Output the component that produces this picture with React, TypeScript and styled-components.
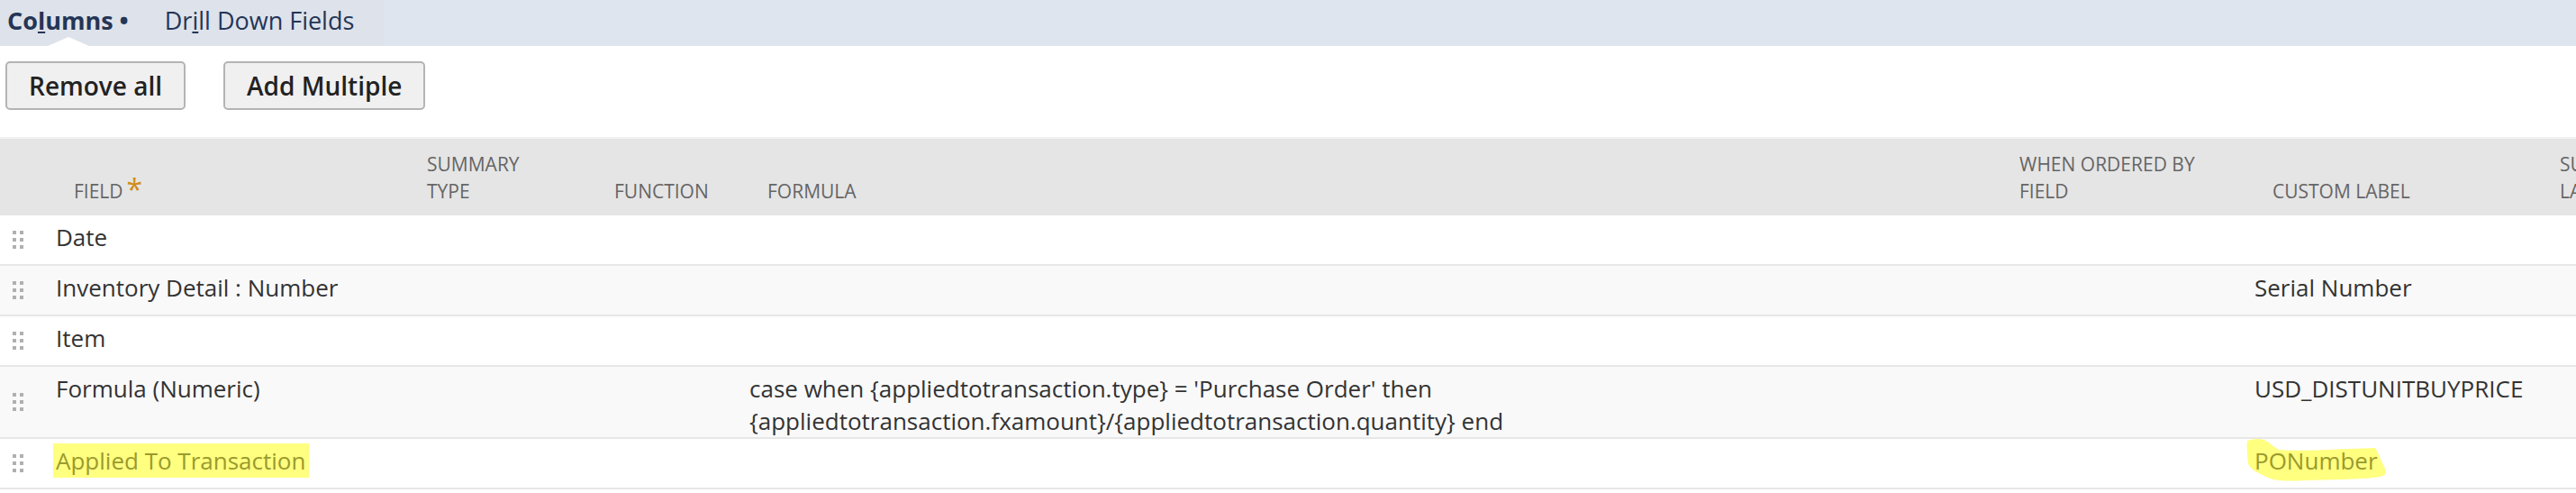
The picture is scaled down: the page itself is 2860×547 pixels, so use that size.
import React from 'react';
import styled, { createGlobalStyle } from 'styled-components';

const GlobalStyle = createGlobalStyle`
  html, body { margin: 0; padding: 0; background: #ffffff; overflow: hidden; }
  body { font-family: "Open Sans", "Noto Sans", sans-serif; }
  * { box-sizing: border-box; }
`;

const Page = styled.div`
  width: 2860px;
  height: 547px;
  overflow: hidden;
  background: #ffffff;
`;

const TabBar = styled.div`
  display: flex;
  height: 51px;
  background: #dfe5ef;
`;

const TabStrip = styled.div`
  display: flex;
  width: 426px;
  height: 51px;
  padding-left: 8px;
  background: #dee2ea;
`;

const Tab = styled.div<{ $active?: boolean }>`
  position: relative;
  height: 51px;
  font-size: 27px;
  line-height: 46px;
  color: #243556;
  font-weight: ${(p) => (p.$active ? 700 : 400)};
  margin-right: ${(p) => (p.$active ? '40px' : '0')};
  white-space: nowrap;
`;

const AccessKey = styled.span`
  text-decoration: underline;
  text-decoration-thickness: 2px;
  text-underline-offset: 2px;
`;

const Pointer = styled.span`
  position: absolute;
  left: 45px;
  bottom: 0;
  width: 0;
  height: 0;
  border-left: 23px solid transparent;
  border-right: 23px solid transparent;
  border-bottom: 10px solid #ffffff;
`;

const Toolbar = styled.div`
  display: flex;
  gap: 42px;
  padding: 17px 0 30px 6px;
`;

const Button = styled.button`
  height: 54px;
  padding: 0 24px;
  border: 2px solid #b4b4b4;
  border-radius: 5px;
  background: #f0f0f0;
  color: #222222;
  font-family: "Open Sans", "Noto Sans", sans-serif;
  font-size: 28px;
  font-weight: 600;
  line-height: 50px;
  cursor: pointer;
`;

const columns = '42px 392px 208px 170px 1390px 281px 319px 200px';

const HeaderRow = styled.div`
  display: grid;
  grid-template-columns: ${columns};
  height: 87px;
  border-top: 2px solid #f2f2f2;
  background: #e5e5e5;
`;

const HeaderCell = styled.div`
  align-self: end;
  padding: 0 8px 12px 40px;
  font-size: 21px;
  line-height: 30px;
  color: #666666;
  text-transform: uppercase;
  white-space: nowrap;
`;

const Required = styled.span`
  color: #d08c18;
  font-size: 32px;
  line-height: 0;
  margin-left: 4px;
  position: relative;
  top: 2px;
`;

const DataRow = styled.div<{ $alt?: boolean }>`
  display: grid;
  grid-template-columns: ${columns};
  min-height: 56px;
  border-bottom: 2px solid #e7e7e7;
  background: ${(p) => (p.$alt ? '#f9f9f9' : '#ffffff')};
`;

const Cell = styled.div`
  padding: 6px 20px 0;
  font-size: 26px;
  line-height: 36px;
  color: #333333;
  white-space: nowrap;
`;

const HandleCell = styled.div`
  align-self: center;
  justify-self: center;
  display: grid;
  grid-template-columns: 4px 4px;
  grid-auto-rows: 4px;
  gap: 4px;
  margin-left: -2px;
`;

const Dot = styled.span`
  width: 4px;
  height: 4px;
  background: #b0b0b0;
`;

const Marker = styled.span`
  background: #ffff80;
  color: #9a9a2e;
  padding: 1px 4px 1px 3px;
  margin-left: -3px;
`;

const ScribbleWrap = styled.span`
  position: relative;
  display: inline-block;
  isolation: isolate;
`;

const Scribble = styled.svg`
  position: absolute;
  left: -13px;
  top: -9px;
  z-index: -1;
`;

const ScribbleText = styled.span`
  color: #9a9a2e;
`;

const Handle = () => (
  <HandleCell>
    {Array.from({ length: 6 }).map((_, i) => (
      <Dot key={i} />
    ))}
  </HandleCell>
);

type RowData = {
  field: React.ReactNode;
  formula?: React.ReactNode;
  label?: React.ReactNode;
};

const rows: RowData[] = [
  { field: 'Date' },
  { field: 'Inventory Detail : Number', label: 'Serial Number' },
  { field: 'Item' },
  {
    field: 'Formula (Numeric)',
    formula: (
      <>
        case when {'{appliedtotransaction.type}'} = 'Purchase Order' then
        <br />
        {'{appliedtotransaction.fxamount}/{appliedtotransaction.quantity}'} end
      </>
    ),
    label: 'USD_DISTUNITBUYPRICE',
  },
  {
    field: <Marker>Applied To Transaction</Marker>,
    label: (
      <ScribbleWrap>
        <Scribble width="166" height="54" viewBox="0 0 166 54">
          <path
            d="M5 5 C10 3 18 2 24 4 C30 7 34 12 40 15 C60 17 90 15 120 14 L147 13 C150 17 152 24 156 32 C159 38 162 43 152 45 C135 48 100 48 70 49 C50 50 36 50 26 45 C16 40 8 37 6 30 C5 22 4 12 5 5 Z"
            fill="#ffff80"
          />
        </Scribble>
        <ScribbleText>PONumber</ScribbleText>
      </ScribbleWrap>
    ),
  },
];

export default function App() {
  return (
    <Page>
      <GlobalStyle />
      <TabBar>
        <TabStrip>
          <Tab $active>
            Co<AccessKey>l</AccessKey>umns •
            <Pointer />
          </Tab>
          <Tab>
            Dr<AccessKey>i</AccessKey>ll Down Fields
          </Tab>
        </TabStrip>
      </TabBar>
      <Toolbar>
        <Button>Remove all</Button>
        <Button>Add Multiple</Button>
      </Toolbar>
      <HeaderRow>
        <div />
        <HeaderCell>
          Field<Required>*</Required>
        </HeaderCell>
        <HeaderCell>
          Summary
          <br />
          Type
        </HeaderCell>
        <HeaderCell>Function</HeaderCell>
        <HeaderCell>Formula</HeaderCell>
        <HeaderCell>
          When Ordered By
          <br />
          Field
        </HeaderCell>
        <HeaderCell>Custom Label</HeaderCell>
        <HeaderCell>
          Summary
          <br />
          Label
        </HeaderCell>
      </HeaderRow>
      {rows.map((r, i) => (
        <DataRow key={i} $alt={i % 2 === 1}>
          <Handle />
          <Cell>{r.field}</Cell>
          <Cell />
          <Cell />
          <Cell>{r.formula}</Cell>
          <Cell />
          <Cell>{r.label}</Cell>
          <Cell />
        </DataRow>
      ))}
    </Page>
  );
}
